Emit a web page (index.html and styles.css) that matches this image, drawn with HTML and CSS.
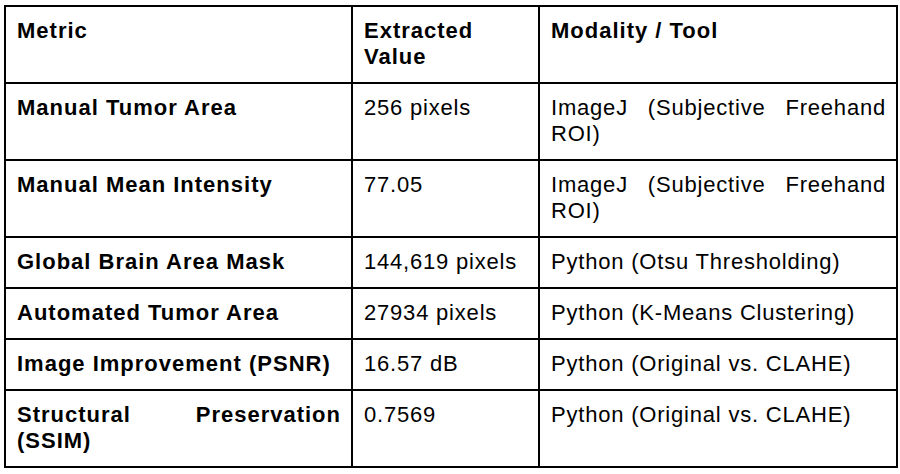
FILE: index.html
```html
<!DOCTYPE html>
<html>
<head>
<meta charset="utf-8">
<link rel="stylesheet" href="styles.css">
</head>
<body>
<table class="metrics">
  <colgroup>
    <col class="c1">
    <col class="c2">
    <col class="c3">
  </colgroup>
  <thead>
    <tr>
      <th>Metric</th>
      <th>Extracted Value</th>
      <th>Modality / Tool</th>
    </tr>
  </thead>
  <tbody>
    <tr>
      <td class="name">Manual Tumor Area</td>
      <td>256 pixels</td>
      <td>ImageJ (Subjective Freehand ROI)</td>
    </tr>
    <tr>
      <td class="name">Manual Mean Intensity</td>
      <td>77.05</td>
      <td>ImageJ (Subjective Freehand ROI)</td>
    </tr>
    <tr>
      <td class="name">Global Brain Area Mask</td>
      <td>144,619 pixels</td>
      <td>Python (Otsu Thresholding)</td>
    </tr>
    <tr>
      <td class="name">Automated Tumor Area</td>
      <td>27934 pixels</td>
      <td>Python (K-Means Clustering)</td>
    </tr>
    <tr>
      <td class="name">Image Improvement (PSNR)</td>
      <td>16.57 dB</td>
      <td>Python (Original vs. CLAHE)</td>
    </tr>
    <tr>
      <td class="name">Structural Preservation (SSIM)</td>
      <td>0.7569</td>
      <td>Python (Original vs. CLAHE)</td>
    </tr>
  </tbody>
</table>
</body>
</html>
```

FILE: styles.css
```css
html, body {
  margin: 0;
  padding: 0;
  background: #ffffff;
}

body {
  padding: 5px 0 0 4px;
  font-family: "Liberation Sans", Arial, sans-serif;
  color: #000000;
}

.metrics {
  border-collapse: collapse;
  table-layout: fixed;
  width: 892px;
  font-size: 22px;
  line-height: 26px;
  letter-spacing: 0.8px;
}

.c1 { width: 347px; }
.c2 { width: 187px; }
.c3 { width: 358px; }

.metrics th,
.metrics td {
  border: 2px solid #000000;
  padding: 11px 10px 12px 11px;
  vertical-align: top;
  text-align: justify;
}

.metrics th {
  font-weight: bold;
  letter-spacing: 1px;
}

.metrics td.name {
  font-weight: bold;
  letter-spacing: 1px;
}
```
